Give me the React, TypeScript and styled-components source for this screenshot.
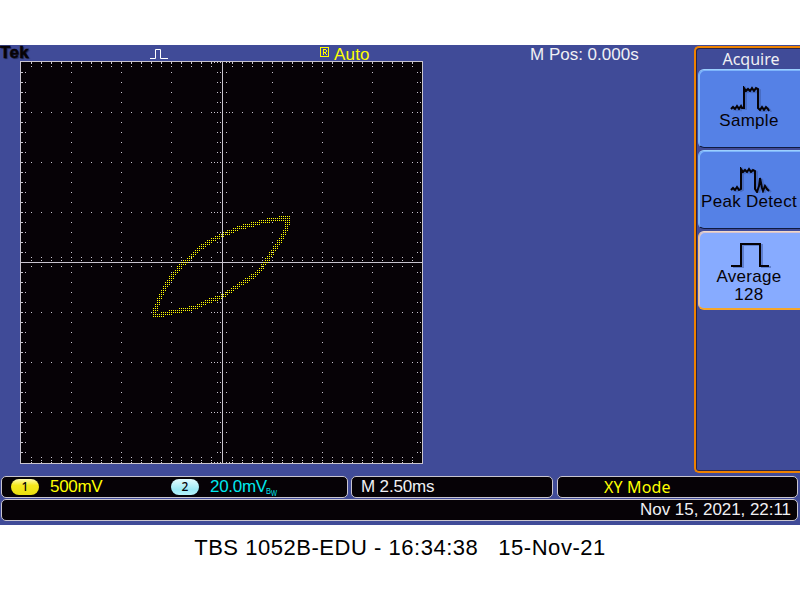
import React from "react";
import styled, { createGlobalStyle } from "styled-components";

const Global = createGlobalStyle`
  * { box-sizing: border-box; }
  body { margin: 0; background: #fff; overflow: hidden; }
`;

const Page = styled.div`
  width: 800px;
  height: 600px;
  padding-top: 45px;
  background: #fff;
  font-family: "Liberation Sans", Arial, sans-serif;
`;

const Screen = styled.main`
  width: 800px;
  height: 480px;
  background: #404b98;
  overflow: hidden;
`;

const Upper = styled.div`
  display: flex;
  height: 429px;
`;

const Left = styled.section`
  width: 694px;
  flex: none;
`;

const TopBar = styled.header`
  display: flex;
  height: 16px;
  svg { flex: none; display: block; }
`;

const Label = styled.span<{ $color?: string; $ls?: number; $w?: number; $noto?: boolean; $indent?: number }>`
  flex: none;
  white-space: pre;
  line-height: ${(p) => (p.$noto ? 21 : 19)}px;
  width: ${(p) => (p.$w ? `${p.$w}px` : "auto")};
  padding-left: ${(p) => p.$indent ?? 0}px;
  font-family: ${(p) => (p.$noto ? '"Noto Sans"' : '"Liberation Sans"')}, sans-serif;
  font-size: ${(p) => (p.$noto ? 16 : 17)}px;
  letter-spacing: ${(p) => p.$ls ?? 0}px;
  color: ${(p) => p.$color ?? "#f0f0f4"};
`;

const Logo = styled(Label)`
  font-weight: bold;
  line-height: 16px;
  text-shadow: 1px 1px 1px #20264c;
  -webkit-text-stroke: 0.5px #060206;
`;

const Graph = styled.svg`
  display: block;
  margin-left: 20px;
`;

const Menu = styled.aside`
  width: 106px;
  height: 427px;
  margin-top: 1px;
  padding: 2px 0 0 2px;
  border: 2px solid #ee8200;
  border-right: 0;
  border-radius: 5px 0 0 5px;
  box-shadow: inset 1px 1px 0 #2a2448, inset 0 -1px 0 #2a2448;
`;

const MenuTitle = styled.h1`
  margin: 0;
  height: 19px;
  padding-left: 4px;
  text-align: center;
  color: #f0f0f4;
  font: 400 16px/18px "Noto Sans", sans-serif;
`;

const MenuButton = styled.button<{ $active?: boolean }>`
  display: flex;
  flex-direction: column;
  align-items: center;
  width: 104px;
  height: 79px;
  margin: 0 0 2px;
  padding: ${(p) => (p.$active ? 10 : 16)}px 3px 0 0;
  border: 1px solid;
  border-color: ${(p) => (p.$active ? "#f0d8c8 #87abff #f5a62a #f5c078" : "#9cd0ff #5581e6 #101a40 #74aefc")};
  border-right: 0;
  border-bottom-width: ${(p) => (p.$active ? 2 : 1)}px;
  border-radius: 6px 0 0 6px;
  box-shadow: inset 1px 1px 0 ${(p) => (p.$active ? "#d8c4d0" : "#7db4fb")};
  background: ${(p) => (p.$active ? "#87abff" : "#5581e6")};
  color: #060206;
  font: 17px/18px "Liberation Sans", sans-serif;
  letter-spacing: 0.3px;
  white-space: nowrap;
  svg { flex: none; display: block; margin: 0 0 0 3px; }
`;

const Readouts = styled.div`
  display: flex;
  height: 25px;
  padding: 2px 1px 0;
  gap: 3px;
`;

const Box = styled.div<{ $w: number; $pad: number; $gap?: number }>`
  display: flex;
  width: ${(p) => p.$w}px;
  height: 22px;
  flex: none;
  margin-left: ${(p) => p.$gap ?? 0}px;
  padding-left: ${(p) => p.$pad}px;
  border: 1px solid #c9c5cf;
  border-radius: 5px;
  background: #060206;
`;

const DateBar = styled(Box)`
  justify-content: flex-end;
  padding-right: 6px;
`;

const Badge = styled.span<{ $blue?: boolean }>`
  width: 28px;
  height: 16px;
  margin-top: 2px;
  flex: none;
  border-radius: 8px;
  text-align: center;
  font: 500 12px/16px "Noto Sans", sans-serif;
  color: #060206;
  background: ${(p) =>
    p.$blue
      ? "linear-gradient(#e4fcff, #9ce9f4 65%, #b4f2fa)"
      : "linear-gradient(#fffcb0, #f4e81c 40%, #eadf10)"};
`;

const BandwidthMark = styled.svg`
  flex: none;
  margin: 9px 0 0 -1px;
`;

const Caption = styled.footer`
  height: 46px;
  text-align: center;
  white-space: pre;
  color: #000;
  font-size: 22px;
  line-height: 46px;
  letter-spacing: 0.53px;
`;

const px = (x: number, y: number) => `M${x} ${y}h1v1h-1z`;

function gridPath() {
  const out: string[] = [];
  const xs: number[] = [];
  const ys: number[] = [];
  for (let k = 1; k < 40; k++) {
    if (k !== 20) xs.push(k < 20 ? 1 + k * 10 : 2 + k * 10);
    ys.push(1 + k * 10);
  }
  for (const x of xs) {
    for (const y of [1, 2, 5, 196, 199, 205, 396, 399, 401]) out.push(px(x, y));
    for (let k = 1; k < 8; k++) out.push(px(x, 1 + k * 50));
  }
  for (const y of ys) {
    for (const x of [1, 2, 5, 197, 200, 206, 397, 400]) out.push(px(x, y));
    for (let k = 1; k < 8; k++) if (k !== 4) out.push(px(k < 4 ? 1 + k * 50 : 2 + k * 50, y));
  }
  for (let k = 0; k < 9; k++) {
    for (const x of [191, 194, 197, 200, 206, 209, 212]) out.push(px(x, k === 8 ? 401 : 1 + k * 50));
  }
  return out.join("");
}

const trace: [number, number][] = [
  [42, 342], [54, 308], [66, 280], [78, 257], [90, 238], [108, 215], [124, 195], [140, 183],
  [155, 168], [172, 152], [190, 138], [210, 124], [230, 113], [248, 105], [270, 96],
  [290, 86], [320, 78], [350, 70], [380, 62], [410, 57], [446, 55], [440, 82], [425, 115],
  [410, 138], [395, 160], [375, 190], [360, 209], [340, 228], [320, 241], [290, 260],
  [265, 277], [248, 288], [225, 297], [200, 306], [180, 317], [150, 326], [125, 331],
  [90, 338], [60, 345], [42, 345], [42, 342],
].map(([x, y]) => [x / 3 + 120, y / 3 + 139]);

function tracePath() {
  const out: string[] = [];
  for (let y = 151; y < 259; y += 2) {
    for (let x = 131; x < 271; x += 2) {
      let best = 99;
      for (let i = 1; i < trace.length; i++) {
        const [ax, ay] = trace[i - 1];
        const dx = trace[i][0] - ax;
        const dy = trace[i][1] - ay;
        const t = Math.max(0, Math.min(1, ((x + 0.5 - ax) * dx + (y + 0.5 - ay) * dy) / (dx * dx + dy * dy)));
        best = Math.min(best, Math.hypot(x + 0.5 - ax - t * dx, y + 0.5 - ay - t * dy));
      }
      if (best < 2.35) out.push(px(x, y));
    }
  }
  return out.join("");
}

const Wave = ({ d }: { d: string }) => (
  <svg width="42" height="26" viewBox="0 0 42 26" fill="none" strokeWidth="2">
    <path d={d} stroke="#3d5ba8" opacity="0.55" transform="translate(2 1)" />
    <path d={d} stroke="#060206" />
  </svg>
);

const SAMPLE = "M1 23l2-2 2 2 2-3 2 3 2-3 1 2 2 0V2l2 3 2-2 2 2 2-3 2 3 2-3 2 1v19l2 2 2-3 2 3 2-3 2 2 1 2";
const PEAK = "M1 23l2-2 2 2 2-3 2 3 2-1V2l2 3 2-2 2 2 2-3 2 3 2-2 2 1v18l2 3 2-6 1-8 2 10 1 3 2-5 2 3 2 2";
const AVERAGE = "M1 24h10V2h19v22h9";

export default function App() {
  return (
    <>
      <Global />
      <Page>
        <Screen>
          <Upper>
            <Left>
              <TopBar>
                <Logo $w={150} $ls={0.3} $color="#060206">Tek</Logo>
                <svg width="170" height="16" fill="none" stroke="#fff">
                  <path d="M0 13.5h5.5v-9h5v9h7.5" />
                </svg>
                <svg width="14" height="16" fill="none" stroke="#ff0" shapeRendering="crispEdges">
                  <rect x="0.5" y="2.5" width="8" height="9" />
                  <path d="M3 10V4.5h2.5L6 5v2l-.5.5H3M5 7.5L6.5 10" />
                </svg>
                <Label $w={196} $color="#ff0" $ls={0.2}>Auto</Label>
                <Label>M Pos: 0.000s</Label>
              </TopBar>
              <Graph width="403" height="403" shapeRendering="crispEdges">
                <rect width="403" height="403" fill="#060206" />
                <path d={gridPath()} fill="#c9c5cf" />
                <path d="M.5 .5h402v402H.5zM202.5 0v403M0 201.5h403" fill="none" stroke="#c9c5cf" />
                <path d={tracePath()} fill="#ff0" />
              </Graph>
            </Left>
            <Menu>
              <MenuTitle>Acquire</MenuTitle>
              <MenuButton><Wave d={SAMPLE} />Sample</MenuButton>
              <MenuButton><Wave d={PEAK} />Peak Detect</MenuButton>
              <MenuButton $active><Wave d={AVERAGE} /><span>Average</span><span>128</span></MenuButton>
            </Menu>
          </Upper>
          <Readouts>
            <Box $w={347} $pad={9}>
              <Badge>1</Badge>
              <Label $w={132} $indent={11} $color="#ff0" $ls={-0.3}>500mV</Label>
              <Badge $blue>2</Badge>
              <Label $indent={11} $color="#00e8ee" $ls={-0.3}>20.0mV</Label>
              <BandwidthMark width="12" height="11" fill="#00e8ee">
                <text x="0" y="8" fontSize="9" textLength="5" lengthAdjust="spacingAndGlyphs">B</text>
                <text x="5" y="10" fontSize="9" textLength="6" lengthAdjust="spacingAndGlyphs">W</text>
              </BandwidthMark>
            </Box>
            <Box $w={202} $pad={9}>
              <Label $ls={-0.15}>M 2.50ms</Label>
            </Box>
            <Box $w={241} $pad={46} $gap={1}>
              <Label $noto $color="#ff0" $ls={0.15}>XY Mode</Label>
            </Box>
          </Readouts>
          <DateBar $w={797} $pad={0} $gap={1}>
            <Label $ls={-0.05}>Nov 15, 2021, 22:11</Label>
          </DateBar>
        </Screen>
        <Caption>TBS 1052B-EDU - 16:34:38   15-Nov-21</Caption>
      </Page>
    </>
  );
}
